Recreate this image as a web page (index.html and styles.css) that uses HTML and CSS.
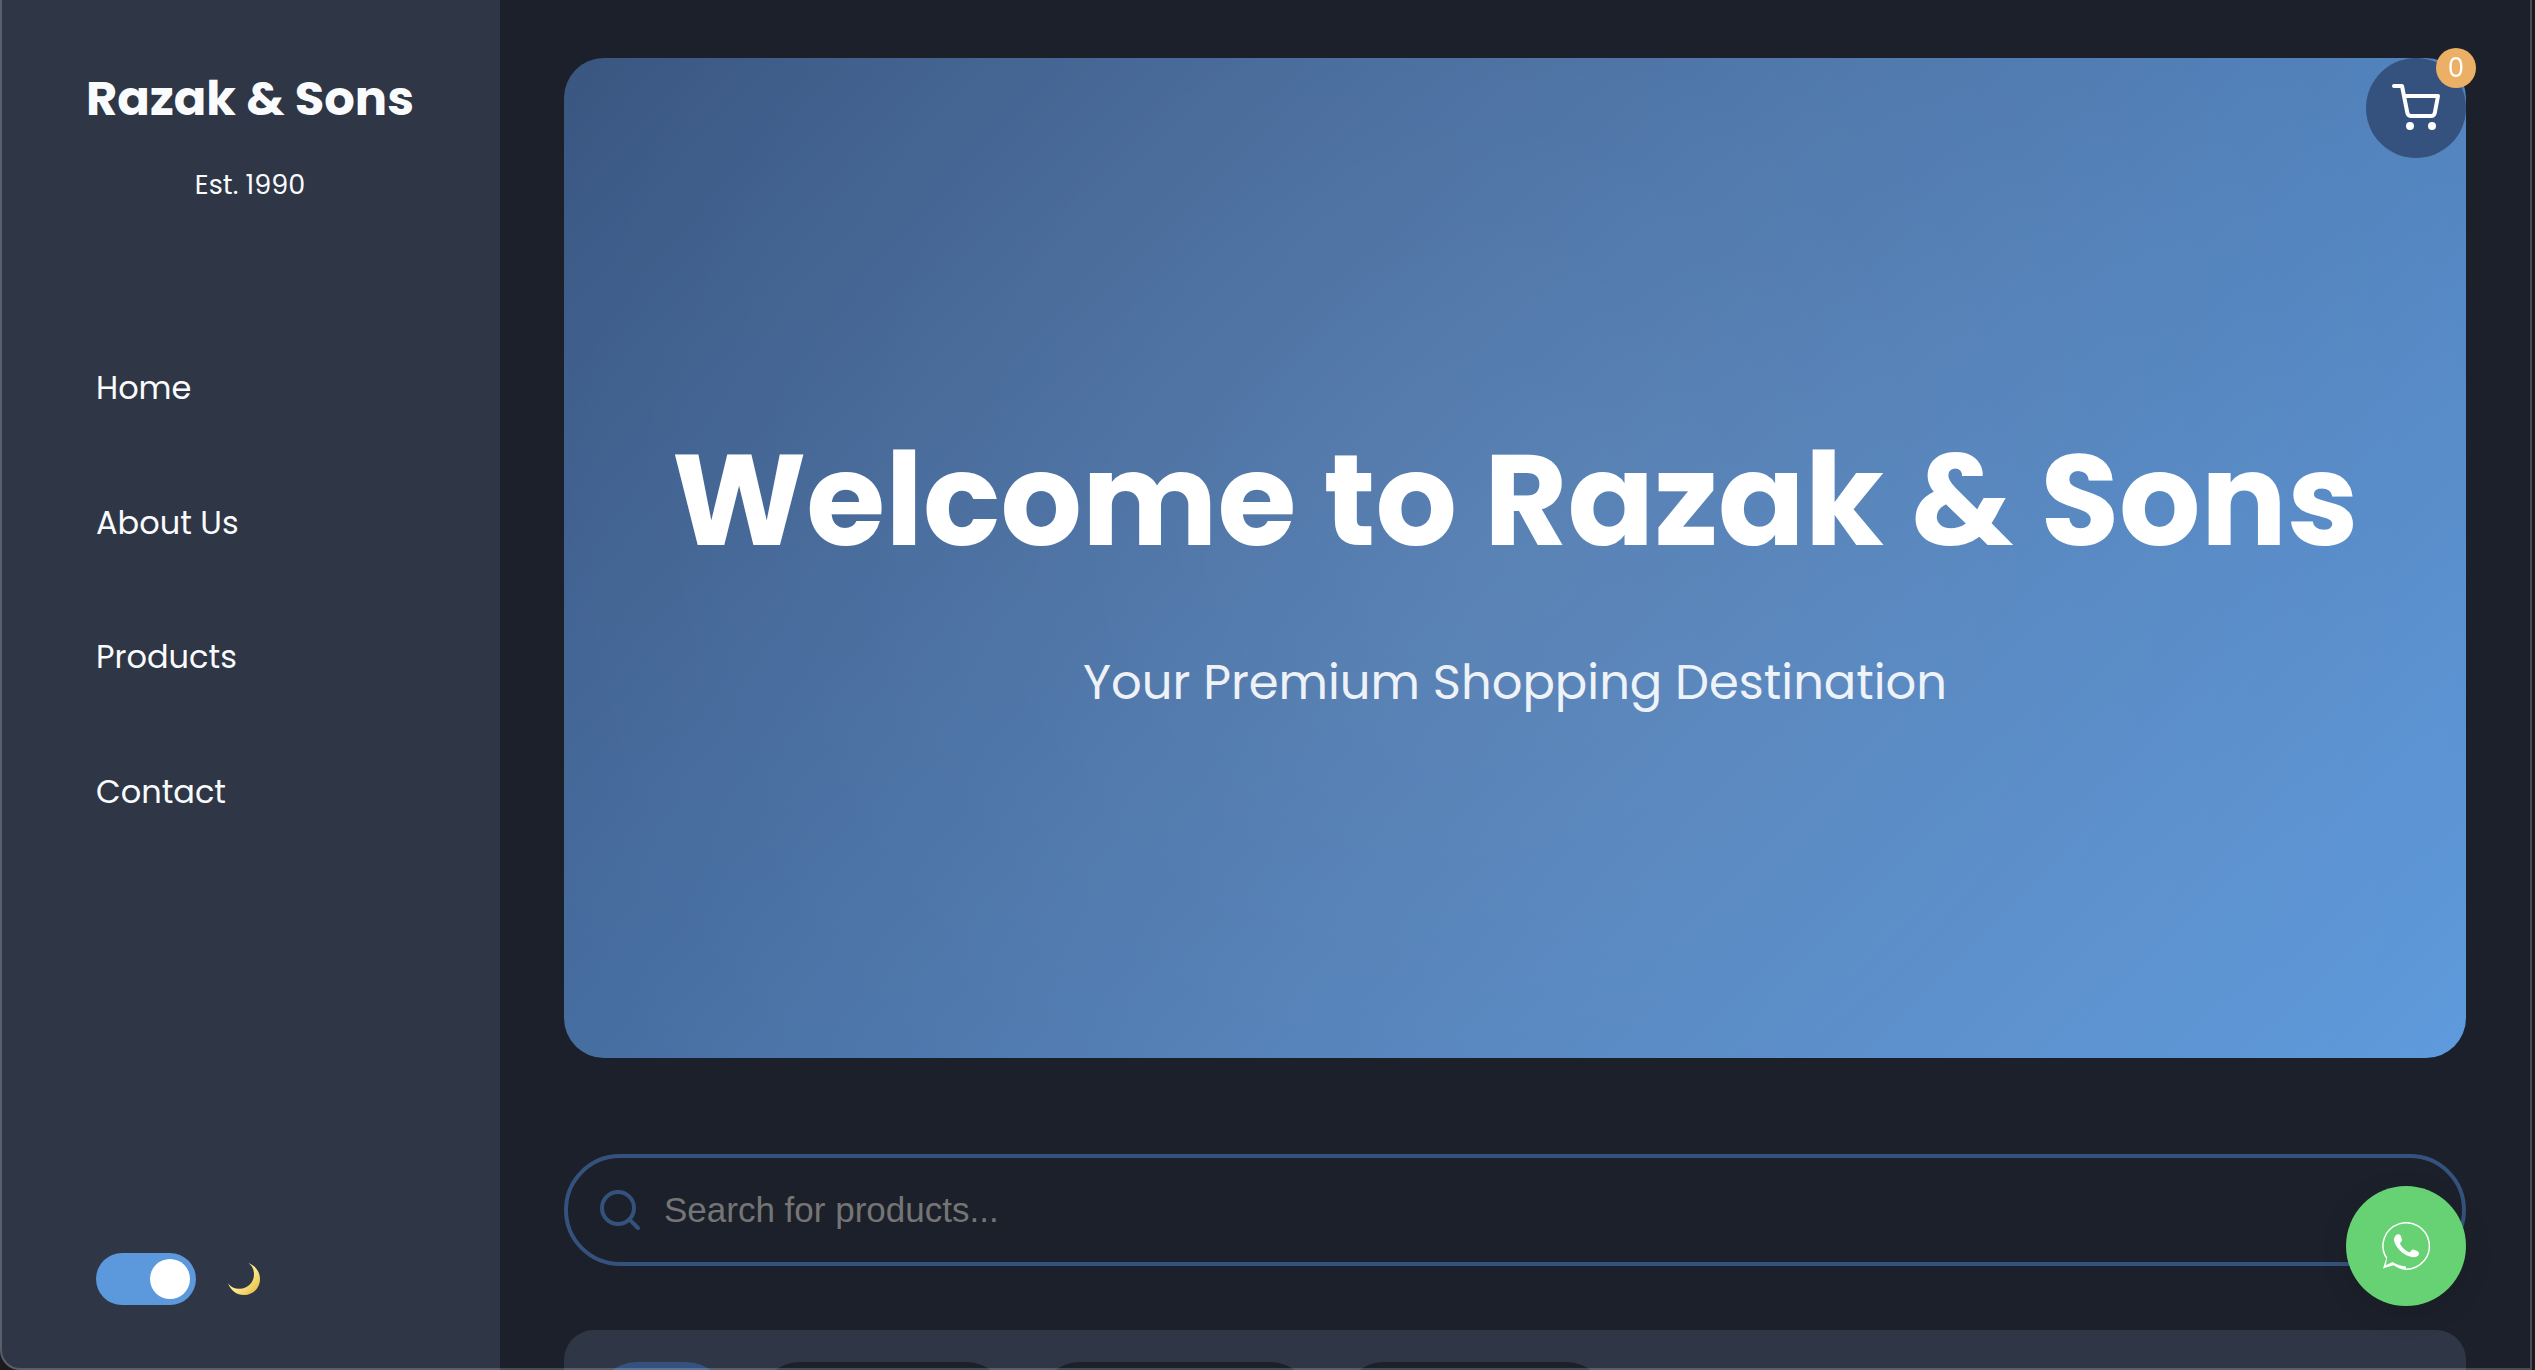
FILE: index.html
```html
<!DOCTYPE html>
<html lang="en">

<head>
    <meta charset="UTF-8">
    <meta name="viewport" content="width=device-width, initial-scale=1.0">
    <title>Razak & Sons</title>
    <link rel="stylesheet" href="styles.css">
</head>

<body>
    <aside class="sidebar">
        <div class="logo">
            <h1>Razak &amp; Sons</h1>
            <p>Est. 1990</p>
        </div>
        <nav class="nav-links">
            <a href="#home">Home</a>
            <a href="#about">About Us</a>
            <a href="#products">Products</a>
            <a href="#contact">Contact</a>
        </nav>
        <div class="theme-switch">
            <input type="checkbox" id="theme-toggle" class="toggle" aria-label="Dark mode" checked>
            <label for="theme-toggle">
                <svg class="moon" viewBox="0 0 32 32" aria-hidden="true">
                    <defs>
                        <linearGradient id="moon-fill" x1="0.2" y1="0.2" x2="0.9" y2="0.9">
                            <stop offset="0.5" stop-color="#fbe88a" />
                            <stop offset="1" stop-color="#e9bd45" />
                        </linearGradient>
                    </defs>
                    <path d="M20.5 0C27 2.500 32 8.500 32 16C32 25 25 32 16 32C8.500 32 2.500 27.500 0 20.300C3 24.500 7 26 12 25.800C19.500 25.500 26 19.500 26 11.500C26 7 24.500 3 20.500 0Z" fill="url(#moon-fill)" />
                </svg>
            </label>
        </div>
    </aside>

    <main class="main-content">
        <section class="hero">
            <h2>Welcome to Razak &amp; Sons</h2>
            <p>Your Premium Shopping Destination</p>
        </section>

        <div class="search-box">
            <svg viewBox="0 0 24 24" aria-hidden="true">
                <circle cx="11" cy="11" r="8" />
                <path d="M21 21l-4.350-4.350" />
            </svg>
            <input type="text" placeholder="Search for products..." aria-label="Search for products">
        </div>

        <div class="categories">
            <button class="category active">All</button>
            <button class="category">Electronics</button>
            <button class="category">Home Decor</button>
            <button class="category">Accessories</button>
        </div>
    </main>

    <button class="cart-btn" aria-label="Cart">
        <svg viewBox="0 0 24 24" aria-hidden="true">
            <circle cx="9" cy="21" r="1" />
            <circle cx="20" cy="21" r="1" />
            <path d="M1 1h4l2.680 13.390a2 2 0 0 0 2 1.610h9.720a2 2 0 0 0 2-1.610L23 6H6" />
        </svg>
        <span class="cart-count">0</span>
    </button>

    <a class="whatsapp" href="#whatsapp" aria-label="WhatsApp">
        <svg viewBox="0 0 48 48" aria-hidden="true">
            <path class="bubble" d="M4 35.500A23.200 23.200 0 1 1 24 47.200" />
            <path class="solid" d="M1.200 29C2 32 3 34 4.300 36L1 46.500L11.500 43.300C15.500 46 19.500 47.700 24 48V44.500C19 44.300 14.500 42.500 10.500 40L3.800 43.200L5.200 35.500C3.800 33.500 2.800 31.500 2.300 29Z" />
            <path class="solid" d="M15 12.500c1.500-.6 2.800-.4 3.300.6.800 1.500 1.500 3.400 1.700 4.800.1 1.300-1.700 2.400-2 3.400 1.200 3.800 6 8 9.500 9.200 1.200-.4 2-3 3.400-2.900 1.800.2 4.400 1.400 5.600 2.300.9 1 .5 3-.4 3.900-2 1.700-5.500 1.700-9 .4C20 32 13.500 25 12 18.500c-.2-2.500 1-4.800 3-6z" />
        </svg>
    </a>
</body>

</html>
```
FILE: styles.css
```css
:root {
    --primary: #35527e;
    --accent: #5b98dc;
    --bg: #1c202a;
    --panel: #2f3645;
    --text: #f9fbfd;
}

* {
    box-sizing: border-box;
    margin: 0;
    padding: 0;
    font-family: 'Poppins', 'Inter', sans-serif;
}

html {
    scrollbar-width: none;
}

body {
    display: flex;
    align-items: flex-start;
    background: var(--bg);
    color: var(--text);
    line-height: 1.7;
}

/* thin frame round the window */
body::after {
    content: "";
    position: fixed;
    inset: -30px 3px 0 0;
    border: 2px solid rgba(255, 255, 255, 0.2);
    border-radius: 0 0 0 20px;
    box-shadow: 0 0 0 30px #1b1b1d;
    pointer-events: none;
}

.sidebar {
    position: sticky;
    top: 0;
    display: flex;
    flex-direction: column;
    flex: 0 0 500px;
    height: 100vh;
    padding: 58px 64px 65px;
    background: var(--panel);
}

.logo {
    text-align: center;
    white-space: nowrap;
}

.logo h1 {
    font-size: 48px;
}

.logo p {
    margin-top: 22px;
    font-size: 27px;
}

.nav-links {
    display: flex;
    flex-direction: column;
    gap: 80px;
    padding: 154px 32px 0;
}

.nav-links a {
    color: var(--text);
    font-size: 32px;
    text-decoration: none;
}

.theme-switch {
    display: flex;
    align-items: center;
    gap: 32px;
    margin-top: auto;
    padding: 0 32px;
}

.toggle {
    appearance: none;
    width: 100px;
    height: 52px;
    padding: 6px;
    border-radius: 26px;
    background: #ccc;
}

.toggle::before {
    content: "";
    display: block;
    width: 40px;
    height: 40px;
    border-radius: 50%;
    background: #fff;
}

.toggle:checked {
    background: var(--accent);
}

.toggle:checked::before {
    margin-left: auto;
}

.moon {
    display: block;
    width: 32px;
    height: 32px;
}

.main-content {
    flex: 1;
    padding: 58px 69px 64px 64px;
}

.hero {
    display: flex;
    flex-direction: column;
    align-items: center;
    justify-content: center;
    gap: 32px;
    height: 1000px;
    margin-bottom: 96px;
    border-radius: 40px;
    background:
        radial-gradient(circle 1400px at center, rgba(255, 255, 255, 0.1), transparent),
        linear-gradient(135deg, var(--primary), var(--accent));
    color: #fff;
    text-align: center;
}

.hero h2 {
    font-size: 128px;
}

.hero p {
    font-size: 48px;
    opacity: 0.9;
}

.search-box {
    display: flex;
    align-items: center;
    gap: 20px;
    height: 112px;
    margin-bottom: 64px;
    padding: 0 28px;
    border: 4px solid var(--primary);
    border-radius: 56px;
}

.search-box svg {
    width: 48px;
    height: 48px;
    fill: none;
    stroke: var(--primary);
    stroke-width: 2;
    stroke-linecap: round;
}

.search-box input {
    flex: 1;
    border: none;
    outline: none;
    background: transparent;
    color: var(--text);
    font-family: 'Liberation Sans', Arial, sans-serif;
    font-size: 35px;
}

.search-box input::placeholder {
    color: #757575;
}

.categories {
    display: flex;
    gap: 32px;
    padding: 32px;
    border-radius: 30px;
    background: var(--panel);
}

.category {
    padding: 20px 49px;
    border: none;
    border-radius: 50px;
    background: var(--bg);
    color: var(--text);
    font-size: 28px;
}

.category.active {
    background: var(--primary);
}

.cart-btn {
    position: fixed;
    top: 58px;
    right: 69px;
    display: grid;
    place-items: center;
    width: 100px;
    height: 100px;
    border: none;
    border-radius: 50%;
    background: var(--primary);
}

.cart-btn svg {
    width: 48px;
    height: 48px;
    fill: none;
    stroke: #fff;
    stroke-width: 2;
    stroke-linecap: round;
    stroke-linejoin: round;
    overflow: visible;
}

.cart-count {
    position: absolute;
    top: -10px;
    right: -10px;
    width: 40px;
    border-radius: 50%;
    background: #ebaf65;
    color: #fff;
    font-size: 26px;
    line-height: 40px;
}

.whatsapp {
    position: fixed;
    right: 69px;
    bottom: 64px;
    display: grid;
    place-items: center;
    width: 120px;
    height: 120px;
    border-radius: 50%;
    background: #67d273;
    box-shadow: 0 8px 30px rgba(0, 0, 0, 0.1);
}

.whatsapp svg {
    width: 48px;
    height: 48px;
}

.bubble {
    fill: none;
    stroke: #fff;
    stroke-width: 1.5;
}

.solid {
    fill: #fff;
}
```
